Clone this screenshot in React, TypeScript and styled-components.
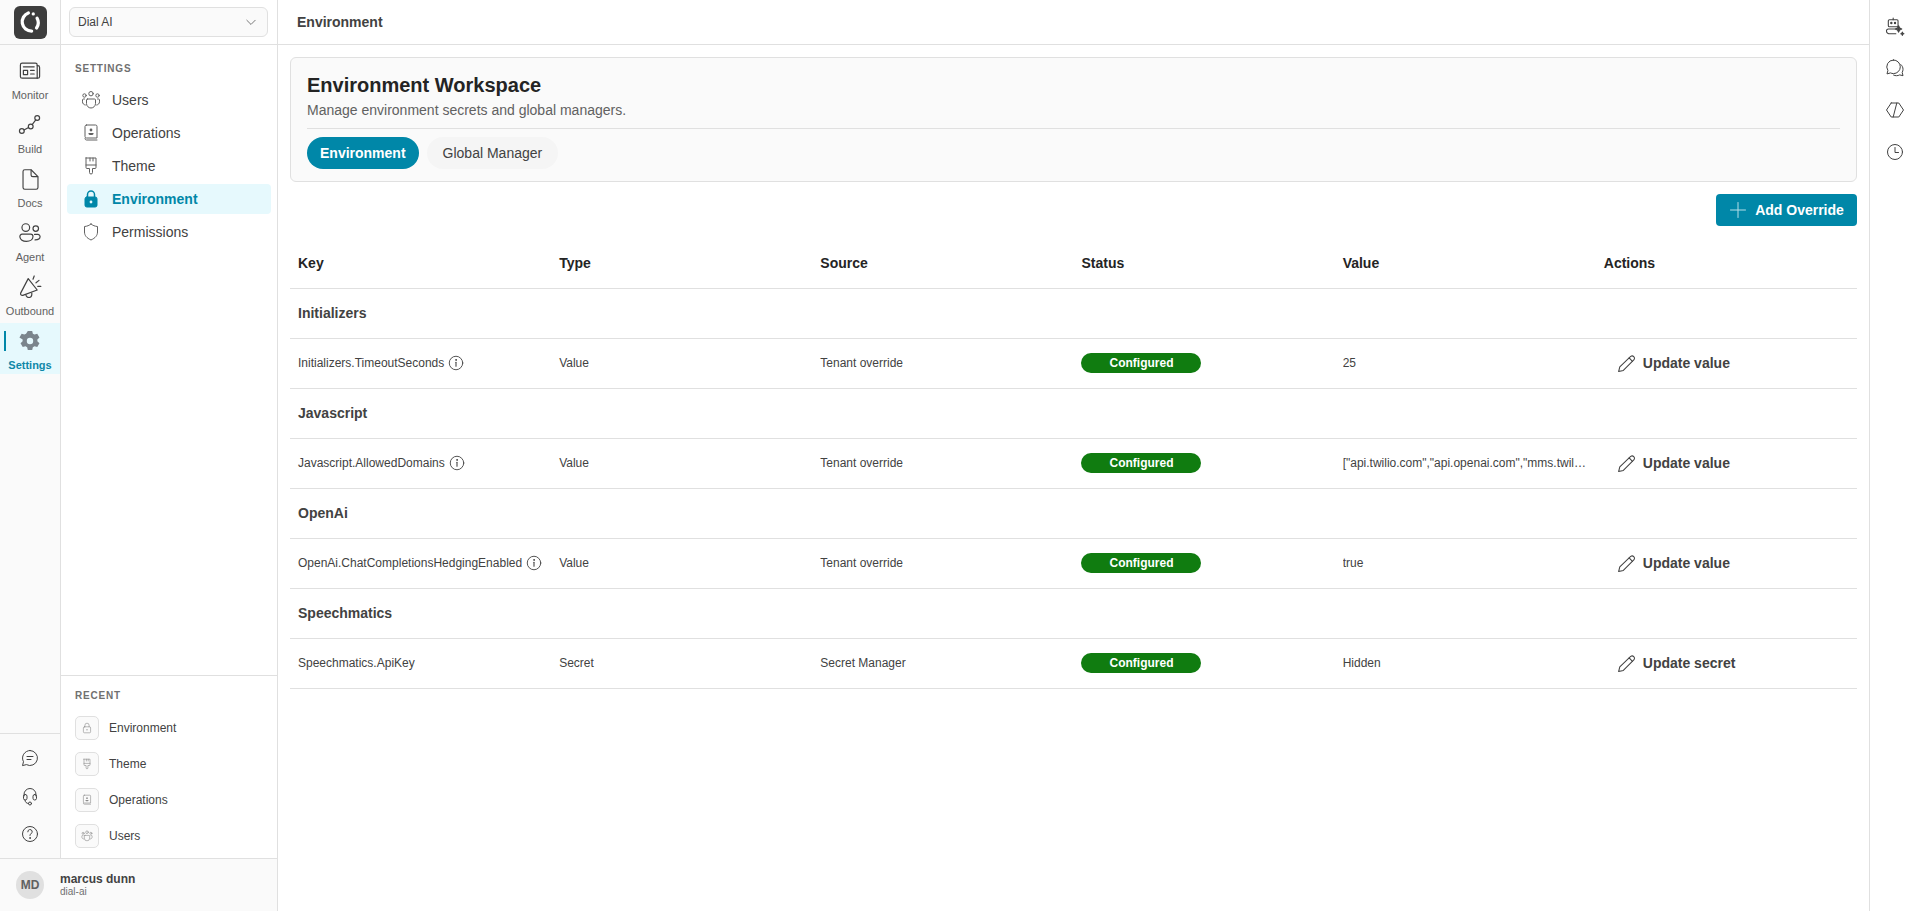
import { ReactNode } from "react";
import styled, { createGlobalStyle } from "styled-components";

const GlobalStyle = createGlobalStyle`
  html, body, #root {
    margin: 0;
    padding: 0;
    height: 100%;
  }
  body {
    font-family: "Liberation Sans", Arial, sans-serif;
    color: #242424;
    background: #ffffff;
    overflow: hidden;
  }
  * {
    box-sizing: border-box;
  }
`;

const Glyph = ({ size = 20, children }: { size?: number; children: ReactNode }) => (
  <svg
    width={size}
    height={size}
    viewBox="0 0 20 20"
    fill="none"
    stroke="currentColor"
    strokeWidth={1}
    strokeLinecap="round"
    strokeLinejoin="round"
  >
    {children}
  </svg>
);

const NewsIcon = ({ size }: { size?: number }) => (
  <Glyph size={size}>
    <path d="M3.5 3.5h11a1.5 1.5 0 0 1 1.5 1.5v11H3.5A1.5 1.5 0 0 1 2 14.5V5a1.5 1.5 0 0 1 1.5-1.5Z" />
    <path d="M16 5.5h.5A1.5 1.5 0 0 1 18 7v7.5a1.5 1.5 0 0 1-1.5 1.5H16" />
    <path d="M4.5 6.5h9M10.5 9.5h3M10.5 12.5h3" />
    <rect x="4.5" y="9.5" width="3.5" height="3.5" />
  </Glyph>
);

const PathIcon = ({ size }: { size?: number }) => (
  <Glyph size={size}>
    <circle cx="3.2" cy="15" r="2" />
    <circle cx="10.6" cy="11.2" r="2" />
    <circle cx="16" cy="4.2" r="2" />
    <path d="M5 14.1l3.8-2M11.8 9.6l3-3.8" />
  </Glyph>
);

const DocIcon = ({ size }: { size?: number }) => (
  <Glyph size={size}>
    <path d="M5 1.5h5.5L16.5 7.5v9.5a1.5 1.5 0 0 1-1.5 1.5H5A1.5 1.5 0 0 1 3.5 17V3A1.5 1.5 0 0 1 5 1.5Z" />
    <path d="M10.5 1.8V6a1.5 1.5 0 0 0 1.5 1.5h4.2" />
  </Glyph>
);

const AgentIcon = ({ size }: { size?: number }) => (
  <Glyph size={size}>
    <circle cx="6.5" cy="5.5" r="3.2" />
    <circle cx="14.8" cy="6.3" r="2.3" />
    <path d="M3.5 11h7a2 2 0 0 1 2 2c0 2.5-2.5 4-5.5 4s-5-1.500-5.400-3.500A2 2 0 0 1 3.500 11Z" />
    <path d="M13.800 11.200h2.800a1.800 1.800 0 0 1 1.800 1.800c0 1.800-1.800 2.800-4.200 2.800" />
  </Glyph>
);

const MegaphoneIcon = ({ size }: { size?: number }) => (
  <Glyph size={size}>
    <path d="M8.500 3 16 12.500 4 17c-1.200.3-2.200-.8-1.800-1.900L8.500 3Z" />
    <path d="M6.500 16.300c.3 1.800 1.700 2.700 3.200 2.400 1.300-.3 2-1.500 1.800-3.700" />
    <path d="M12.500 3.500 13.500.8M15 6.500l2.500-2M16.500 9.500h2.500" />
  </Glyph>
);

const GearIcon = ({ size = 20 }: { size?: number }) => (
  <svg width={size} height={size} viewBox="0 0 20 20">
    <path
      fill="currentColor"
      fillRule="evenodd"
      d="M8 .8h4l.6 2.500 1.500.9 2.500-.8 2 3.400-1.900 1.800v1.700l1.900 1.800-2 3.400-2.500-.8-1.500.9-.6 2.500H8l-.6-2.500-1.500-.9-2.500.8-2-3.400 1.900-1.800V8.600L.4 6.800l2-3.400 2.500.8 1.500-.9L8 .8Zm2 6.300a2.900 2.900 0 1 0 0 5.800 2.900 2.900 0 0 0 0-5.800Z"
    />
  </svg>
);

const ChatIcon = ({ size }: { size?: number }) => (
  <Glyph size={size}>
    <path d="M10 2.500a7.500 7.500 0 1 1-3.600 14.100l-3.900 1 1-3.900A7.500 7.500 0 0 1 10 2.500Z" />
    <path d="M7 8.500h6M7 11.500h4" />
  </Glyph>
);

const HeadsetIcon = ({ size }: { size?: number }) => (
  <Glyph size={size}>
    <path d="M4 10V8.500a6 6 0 0 1 12 0V10" />
    <rect x="3.500" y="8.500" width="3.500" height="5.500" rx="1.700" />
    <rect x="13" y="8.500" width="3.500" height="5.500" rx="1.700" />
    <path d="M5 14c0 2.200 1.500 3.500 3.500 3.500" />
    <circle cx="10" cy="17.500" r="1.500" />
  </Glyph>
);

const HelpIcon = ({ size }: { size?: number }) => (
  <Glyph size={size}>
    <circle cx="10" cy="10" r="7.500" />
    <path d="M7.800 7.800A2.200 2.200 0 1 1 11 9.700c-.7.400-1 .8-1 1.500v.3" />
    <circle cx="10" cy="14" r=".4" fill="currentColor" />
  </Glyph>
);

const UsersIcon = ({ size }: { size?: number }) => (
  <Glyph size={size}>
    <circle cx="10" cy="3.700" r="2.200" />
    <circle cx="3.500" cy="5.500" r="1.700" />
    <circle cx="16.500" cy="5.500" r="1.700" />
    <path d="M6.500 9h7a1 1 0 0 1 1 1v3.500a4.500 4.500 0 0 1-9 0V10a1 1 0 0 1 1-1Z" />
    <path d="M3.500 9H2.300A1 1 0 0 0 1.500 10v1.800c0 1.700 1.200 3 2.800 3.200M16.500 9h1.200a1 1 0 0 1 .8 1v1.800c0 1.700-1.200 3-2.800 3.200" />
  </Glyph>
);

const BookIcon = ({ size }: { size?: number }) => (
  <Glyph size={size}>
    <path d="M5.500 2h9A1.500 1.500 0 0 1 16 3.500V15H5.500A1.500 1.500 0 0 1 4 13.500v-10A1.500 1.500 0 0 1 5.500 2Z" />
    <path d="M4 15.500c0 1 .7 1.500 1.500 1.500H16" />
    <circle cx="10" cy="7" r="1.400" fill="currentColor" stroke="none" />
    <path d="M7.500 10h5v.7c0 .8-1 1.300-2.500 1.300s-2.500-.5-2.500-1.300V10Z" fill="currentColor" stroke="none" />
  </Glyph>
);

const BrushIcon = ({ size }: { size?: number }) => (
  <Glyph size={size}>
    <path d="M5 2h10v9.500a1 1 0 0 1-1 1h-2.500v4a1.500 1.500 0 0 1-3 0v-4H6a1 1 0 0 1-1-1V2Z" />
    <path d="M5 9h10M9 2v3M12 2v3" />
  </Glyph>
);

const LockIcon = ({ size, solid }: { size?: number; solid?: boolean }) => (
  <Glyph size={size}>
    <path d="M6.500 8V5.500a3.500 3.500 0 0 1 7 0V8" strokeWidth={solid ? 1.500 : 1} />
    <rect x="4" y="8" width="12" height="10" rx="1.800" fill={solid ? "currentColor" : "none"} />
    {solid ? (
      <circle cx="10" cy="13" r="1.400" fill="#e6f9fd" stroke="none" />
    ) : (
      <path d="M9 13h2" />
    )}
  </Glyph>
);

const ShieldIcon = ({ size }: { size?: number }) => (
  <Glyph size={size}>
    <path d="M10 2c1.800 1.500 3.900 2.300 6.500 2.500V10c0 3.500-2.200 6-6.500 8-4.300-2-6.500-4.500-6.500-8V4.500C6.100 4.300 8.200 3.500 10 2Z" />
  </Glyph>
);

const BotIcon = ({ size }: { size?: number }) => (
  <Glyph size={size}>
    <g transform="translate(-1 .5) scale(1.08)">
      <path d="M8.500 1.500v1.500" />
      <rect x="4" y="3" width="9" height="6.500" rx="1" />
      <circle cx="6.800" cy="6" r=".6" fill="currentColor" />
      <circle cx="10.200" cy="6" r=".6" fill="currentColor" />
      <path d="M11 11.500H4a1.800 1.800 0 0 0-1.700 1.900c0 1.500 1.400 2.600 3.700 2.600h5" />
      <path d="M13.500 8.500c.3 2 1 2.700 3 3-2 .3-2.700 1-3 3-.3-2-1-2.700-3-3 2-.3 2.700-1 3-3Z" fill="currentColor" />
      <path d="M17 14.500c.1 1 .5 1.400 1.500 1.500-1 .1-1.400.5-1.500 1.500-.1-1-.5-1.400-1.500-1.500 1-.1 1.400-.5 1.500-1.500Z" fill="currentColor" />
    </g>
  </Glyph>
);

const BubblesIcon = ({ size }: { size?: number }) => (
  <Glyph size={size}>
    <path d="M8.500 2a6.800 6.800 0 0 1 0 13.600c-1.100 0-2.100-.3-3-.7l-3.500 1 .9-3.400A6.800 6.800 0 0 1 8.500 2Z" />
    <path d="M15.800 6.500c1.400 1.200 2.200 2.900 2.200 4.800 0 1.200-.3 2.200-.8 3.100l.8 3.300-3.300-.8c-1 .5-2 .8-3.200.8-1 0-2-.2-2.900-.6" />
  </Glyph>
);

const CodeIcon = ({ size }: { size?: number }) => (
  <Glyph size={size}>
    <path d="M6.200 3 1.500 10l4.700 7h7.600l4.700-7-4.700-7H6.200Z" />
    <path d="M11.800 3 8.200 17" />
  </Glyph>
);

const ClockIcon = ({ size }: { size?: number }) => (
  <Glyph size={size}>
    <circle cx="10" cy="10" r="7.500" />
    <path d="M10 5.500V10.500h3.500" />
  </Glyph>
);

const InfoIcon = ({ size }: { size?: number }) => (
  <Glyph size={size}>
    <circle cx="10" cy="10" r="7.500" />
    <path d="M10 9.200v4.300" strokeWidth={1.200} />
    <circle cx="10" cy="6.600" r=".5" fill="currentColor" />
  </Glyph>
);

const PencilIcon = ({ size }: { size?: number }) => (
  <Glyph size={size}>
    <path d="M14 3.200a2.300 2.300 0 0 1 3.200 3.200L7 16.600 2.500 17.700l1.100-4.500L14 3.200Z" />
    <path d="M12.500 4.700l3.200 3.200" />
  </Glyph>
);

const PlusIcon = ({ size }: { size?: number }) => (
  <Glyph size={size}>
    <path d="M10 2.500v15M2.500 10h15" />
  </Glyph>
);

const ChevronIcon = ({ size }: { size?: number }) => (
  <Glyph size={size}>
    <path d="M4 7.500l6 6 6-6" />
  </Glyph>
);

const LogoMark = () => (
  <svg width="24" height="24" viewBox="0 0 22 22" fill="none" stroke="#ffffff" strokeWidth="3" strokeLinecap="round">
    <path d="M9.500 2.800A8.500 8.500 0 0 0 12.500 19.300" />
    <path d="M17.500 7.500a8.500 8.500 0 0 1-.5 9" />
    <circle cx="14" cy="3.600" r="1.500" fill="#ffffff" stroke="none" />
  </svg>
);

const Shell = styled.div`
  display: flex;
  height: 911px;
  width: 1920px;
`;

const Sidebar = styled.aside`
  width: 278px;
  flex: none;
  display: flex;
  flex-direction: column;
  border-right: 1px solid #e0e0e0;
`;

const SidebarBody = styled.div`
  flex: 1;
  display: flex;
  min-height: 0;
`;

const Rail = styled.nav`
  width: 61px;
  flex: none;
  display: flex;
  flex-direction: column;
  background: #fafafa;
  border-right: 1px solid #e0e0e0;
`;

const LogoCell = styled.div`
  height: 45px;
  flex: none;
  display: flex;
  align-items: center;
  justify-content: center;
  border-bottom: 1px solid #e0e0e0;
`;

const LogoBadge = styled.div`
  width: 33px;
  height: 33px;
  border-radius: 6px;
  background: #3d3d3d;
  display: flex;
  align-items: center;
  justify-content: center;
`;

const RailList = styled.div`
  flex: 1;
  display: flex;
  flex-direction: column;
  gap: 3px;
  padding-top: 8px;
`;

const RailItem = styled.div<{ $active?: boolean }>`
  height: 51px;
  position: relative;
  display: flex;
  flex-direction: column;
  align-items: center;
  padding-top: 7px;
  gap: 6px;
  background: ${(p) => (p.$active ? "#e6f9fd" : "transparent")};
  color: ${(p) => (p.$active ? "#0f87a8" : "#616161")};
  font-size: 11px;
  font-weight: ${(p) => (p.$active ? 700 : 400)};
  line-height: 14px;

  ${(p) =>
    p.$active &&
    `&::before {
      content: "";
      position: absolute;
      left: 4px;
      top: 8px;
      width: 2px;
      height: 20px;
      background: #0087a8;
    }`}
`;

const RailIcon = styled.span<{ $active?: boolean }>`
  display: flex;
  height: 22px;
  align-items: center;
  color: ${(p) => (p.$active ? "#7b858c" : "#424242")};
`;

const RailFoot = styled.div`
  height: 125px;
  flex: none;
  display: flex;
  flex-direction: column;
  align-items: center;
  gap: 18px;
  padding-top: 14px;
  border-top: 1px solid #e0e0e0;
  color: #424242;
`;

const SubPanel = styled.div`
  flex: 1;
  min-width: 0;
  display: flex;
  flex-direction: column;
`;

const SelectRow = styled.div`
  height: 45px;
  flex: none;
  padding: 7px 9px 0 8px;
  border-bottom: 1px solid #e0e0e0;
`;

const TenantSelect = styled.div`
  height: 30px;
  display: flex;
  align-items: center;
  justify-content: space-between;
  padding: 0 9px 0 8px;
  background: #fafafa;
  border: 1px solid #e0e0e0;
  border-radius: 6px;
  font-size: 12px;
  color: #424242;
`;

const MenuBlock = styled.div`
  flex: 1;
  padding: 18px 6px 0;
`;

const SectionLabel = styled.div`
  font-size: 10px;
  font-weight: 700;
  letter-spacing: 0.8px;
  line-height: 12px;
  color: #707070;
  padding-left: 8px;
`;

const MenuList = styled.div`
  display: flex;
  flex-direction: column;
  gap: 3px;
  margin-top: 10px;
`;

const MenuItem = styled.div<{ $active?: boolean }>`
  height: 30px;
  display: flex;
  align-items: center;
  gap: 11px;
  padding-left: 14px;
  border-radius: 4px;
  font-size: 14px;
  background: ${(p) => (p.$active ? "#e6f9fd" : "transparent")};
  color: ${(p) => (p.$active ? "#0087a8" : "#424242")};
  font-weight: ${(p) => (p.$active ? 700 : 400)};

  svg {
    color: ${(p) => (p.$active ? "#0087a8" : "#616161")};
  }
`;

const RecentBlock = styled.div`
  height: 183px;
  flex: none;
  padding: 14px 14px 0;
  border-top: 1px solid #e0e0e0;
`;

const RecentLabel = styled(SectionLabel)`
  padding-left: 0;
`;

const RecentList = styled.div`
  display: flex;
  flex-direction: column;
  gap: 12px;
  margin-top: 14px;
`;

const RecentItem = styled.div`
  display: flex;
  align-items: center;
  gap: 10px;
  font-size: 12px;
  color: #424242;
`;

const RecentThumb = styled.span`
  width: 24px;
  height: 24px;
  display: flex;
  align-items: center;
  justify-content: center;
  background: #fafafa;
  border: 1px solid #e0e0e0;
  border-radius: 5px;
  color: #8a8a8a;
`;

const UserBar = styled.div`
  height: 53px;
  flex: none;
  display: flex;
  align-items: center;
  gap: 16px;
  padding: 0 16px;
  background: #fafafa;
  border-top: 1px solid #e0e0e0;
`;

const Avatar = styled.div`
  width: 28px;
  height: 28px;
  border-radius: 50%;
  background: #e0e0e0;
  color: #616161;
  display: flex;
  align-items: center;
  justify-content: center;
  font-size: 12px;
  font-weight: 700;
`;

const UserName = styled.div`
  font-size: 12px;
  font-weight: 700;
  line-height: 14px;
  color: #424242;
`;

const UserOrg = styled.div`
  font-size: 10px;
  line-height: 12px;
  color: #707070;
`;

const Main = styled.main`
  flex: 1;
  min-width: 0;
  display: flex;
  flex-direction: column;
`;

const PageBar = styled.header`
  height: 45px;
  flex: none;
  display: flex;
  align-items: center;
  padding-left: 19px;
  border-bottom: 1px solid #e0e0e0;
  font-size: 14px;
  font-weight: 700;
  color: #424242;
`;

const Content = styled.div`
  padding: 12px 12px 0;
`;

const Workspace = styled.section`
  height: 125px;
  padding: 15px 16px 0;
  background: #fafafa;
  border: 1px solid #e0e0e0;
  border-radius: 6px;
`;

const WorkspaceTitle = styled.h1`
  margin: 0;
  font-size: 20px;
  line-height: 24px;
  font-weight: 700;
  color: #242424;
`;

const WorkspaceSub = styled.p`
  margin: 5px 0 0;
  font-size: 14px;
  line-height: 16px;
  color: #616161;
`;

const TabRow = styled.div`
  display: flex;
  gap: 8px;
  margin-top: 10px;
  padding-top: 8px;
  border-top: 1px solid #e0e0e0;
`;

const Tab = styled.div<{ $active?: boolean }>`
  height: 32px;
  display: flex;
  align-items: center;
  padding: 0 ${(p) => (p.$active ? 13 : 16)}px;
  border-radius: 16px;
  font-size: 14px;
  font-weight: ${(p) => (p.$active ? 700 : 400)};
  background: ${(p) => (p.$active ? "#0087a8" : "#f5f5f5")};
  color: ${(p) => (p.$active ? "#ffffff" : "#424242")};
`;

const ActionRow = styled.div`
  display: flex;
  justify-content: flex-end;
  margin-top: 12px;
`;

const AddButton = styled.button`
  width: 141px;
  height: 32px;
  display: flex;
  align-items: center;
  justify-content: center;
  gap: 7px;
  padding: 0 1px 0 0;
  border: 0;
  border-radius: 4px;
  background: #0087a8;
  color: #ffffff;
  font-family: inherit;
  font-size: 14px;
  font-weight: 700;

  svg {
    color: #b5dfe8;
  }
`;

const Grid = styled.table`
  width: 100%;
  table-layout: fixed;
  border-collapse: collapse;
  margin-top: 12px;
  font-size: 12px;
  color: #424242;

  th,
  td {
    height: 50px;
    padding: 0 8px;
    text-align: left;
    border-bottom: 1px solid #e0e0e0;
  }

  th {
    font-size: 14px;
    font-weight: 700;
    color: #242424;
    height: 50px;
  }
`;

const GroupCell = styled.td`
  font-size: 14px;
  font-weight: 700;
`;

const KeyWrap = styled.span`
  display: flex;
  align-items: center;
  gap: 3px;
  white-space: nowrap;

  svg {
    color: #424242;
  }
`;

const Clipped = styled.div`
  overflow: hidden;
  text-overflow: ellipsis;
  white-space: nowrap;
`;

const Configured = styled.span`
  width: 120px;
  height: 20px;
  display: flex;
  align-items: center;
  justify-content: center;
  border-radius: 10px;
  background: #107c10;
  color: #ffffff;
  font-size: 12px;
  font-weight: 700;
`;

const UpdateLink = styled.span`
  display: flex;
  align-items: center;
  gap: 6px;
  padding-left: 12px;
  font-size: 14px;
  font-weight: 700;
  color: #424242;
`;

const RightRail = styled.aside`
  width: 51px;
  flex: none;
  display: flex;
  flex-direction: column;
  align-items: center;
  gap: 22px;
  padding-top: 16px;
  border-left: 1px solid #e0e0e0;
  color: #424242;
`;

const railItems = [
  { label: "Monitor", icon: <NewsIcon size={24} /> },
  { label: "Build", icon: <PathIcon size={24} /> },
  { label: "Docs", icon: <DocIcon size={23} /> },
  { label: "Agent", icon: <AgentIcon size={24} /> },
  { label: "Outbound", icon: <MegaphoneIcon size={24} /> },
  { label: "Settings", icon: <GearIcon size={22} />, active: true },
];

const menuItems = [
  { label: "Users", icon: <UsersIcon /> },
  { label: "Operations", icon: <BookIcon /> },
  { label: "Theme", icon: <BrushIcon /> },
  { label: "Environment", icon: <LockIcon solid />, active: true },
  { label: "Permissions", icon: <ShieldIcon /> },
];

const recentItems = [
  { label: "Environment", icon: <LockIcon size={12} /> },
  { label: "Theme", icon: <BrushIcon size={12} /> },
  { label: "Operations", icon: <BookIcon size={12} /> },
  { label: "Users", icon: <UsersIcon size={12} /> },
];

const groups = [
  {
    name: "Initializers",
    key: "Initializers.TimeoutSeconds",
    type: "Value",
    source: "Tenant override",
    value: "25",
    action: "Update value",
  },
  {
    name: "Javascript",
    key: "Javascript.AllowedDomains",
    type: "Value",
    source: "Tenant override",
    value: '["api.twilio.com","api.openai.com","mms.twilio.com"]',
    action: "Update value",
  },
  {
    name: "OpenAi",
    key: "OpenAi.ChatCompletionsHedgingEnabled",
    type: "Value",
    source: "Tenant override",
    value: "true",
    action: "Update value",
  },
  {
    name: "Speechmatics",
    key: "Speechmatics.ApiKey",
    type: "Secret",
    source: "Secret Manager",
    value: "Hidden",
    action: "Update secret",
    noInfo: true,
  },
];

function App() {
  return (
    <>
      <GlobalStyle />
      <Shell>
        <Sidebar>
          <SidebarBody>
            <Rail>
              <LogoCell>
                <LogoBadge>
                  <LogoMark />
                </LogoBadge>
              </LogoCell>
              <RailList>
                {railItems.map((item) => (
                  <RailItem key={item.label} $active={item.active}>
                    <RailIcon $active={item.active}>{item.icon}</RailIcon>
                    {item.label}
                  </RailItem>
                ))}
              </RailList>
              <RailFoot>
                <ChatIcon size={20} />
                <HeadsetIcon size={20} />
                <HelpIcon size={20} />
              </RailFoot>
            </Rail>
            <SubPanel>
              <SelectRow>
                <TenantSelect>
                  Dial AI
                  <ChevronIcon size={14} />
                </TenantSelect>
              </SelectRow>
              <MenuBlock>
                <SectionLabel>SETTINGS</SectionLabel>
                <MenuList>
                  {menuItems.map((item) => (
                    <MenuItem key={item.label} $active={item.active}>
                      {item.icon}
                      {item.label}
                    </MenuItem>
                  ))}
                </MenuList>
              </MenuBlock>
              <RecentBlock>
                <RecentLabel>RECENT</RecentLabel>
                <RecentList>
                  {recentItems.map((item) => (
                    <RecentItem key={item.label}>
                      <RecentThumb>{item.icon}</RecentThumb>
                      {item.label}
                    </RecentItem>
                  ))}
                </RecentList>
              </RecentBlock>
            </SubPanel>
          </SidebarBody>
          <UserBar>
            <Avatar>MD</Avatar>
            <div>
              <UserName>marcus dunn</UserName>
              <UserOrg>dial-ai</UserOrg>
            </div>
          </UserBar>
        </Sidebar>
        <Main>
          <PageBar>Environment</PageBar>
          <Content>
            <Workspace>
              <WorkspaceTitle>Environment Workspace</WorkspaceTitle>
              <WorkspaceSub>Manage environment secrets and global managers.</WorkspaceSub>
              <TabRow>
                <Tab $active>Environment</Tab>
                <Tab>Global Manager</Tab>
              </TabRow>
            </Workspace>
            <ActionRow>
              <AddButton>
                <PlusIcon size={20} />
                Add Override
              </AddButton>
            </ActionRow>
            <Grid>
              <thead>
                <tr>
                  <th>Key</th>
                  <th>Type</th>
                  <th>Source</th>
                  <th>Status</th>
                  <th>Value</th>
                  <th>Actions</th>
                </tr>
              </thead>
              <tbody>
                {groups.map((group) => (
                  <GroupRows key={group.name} group={group} />
                ))}
              </tbody>
            </Grid>
          </Content>
        </Main>
        <RightRail>
          <BotIcon size={20} />
          <BubblesIcon size={20} />
          <CodeIcon size={20} />
          <ClockIcon size={20} />
        </RightRail>
      </Shell>
    </>
  );
}

function GroupRows({ group }: { group: (typeof groups)[number] }) {
  return (
    <>
      <tr>
        <GroupCell colSpan={6}>{group.name}</GroupCell>
      </tr>
      <tr>
        <td>
          <KeyWrap>
            {group.key}
            {!group.noInfo && <InfoIcon size={18} />}
          </KeyWrap>
        </td>
        <td>{group.type}</td>
        <td>{group.source}</td>
        <td>
          <Configured>Configured</Configured>
        </td>
        <td>
          <Clipped>{group.value}</Clipped>
        </td>
        <td>
          <UpdateLink>
            <PencilIcon size={21} />
            {group.action}
          </UpdateLink>
        </td>
      </tr>
    </>
  );
}

export default App;
